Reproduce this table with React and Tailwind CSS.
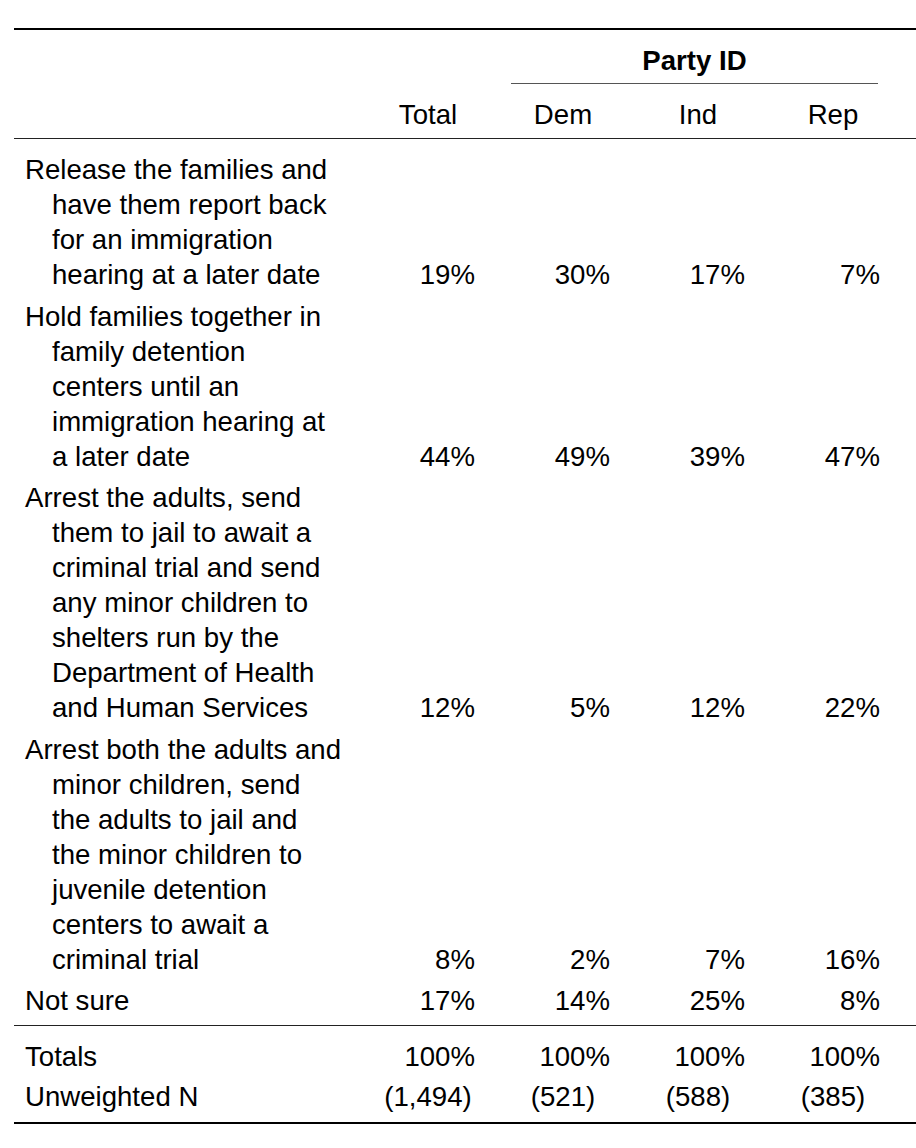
const rows = [
  {
    lines: ['Release the families and', 'have them report back', 'for an immigration', 'hearing at a later date'],
    values: ['19%', '30%', '17%', '7%'],
  },
  {
    lines: ['Hold families together in', 'family detention', 'centers until an', 'immigration hearing at', 'a later date'],
    values: ['44%', '49%', '39%', '47%'],
  },
  {
    lines: [
      'Arrest the adults, send',
      'them to jail to await a',
      'criminal trial and send',
      'any minor children to',
      'shelters run by the',
      'Department of Health',
      'and Human Services',
    ],
    values: ['12%', '5%', '12%', '22%'],
  },
  {
    lines: [
      'Arrest both the adults and',
      'minor children, send',
      'the adults to jail and',
      'the minor children to',
      'juvenile detention',
      'centers to await a',
      'criminal trial',
    ],
    values: ['8%', '2%', '7%', '16%'],
  },
  { lines: ['Not sure'], values: ['17%', '14%', '25%', '8%'] },
]

function Row({ lines, values, first }) {
  return (
    <div className={`flex items-end ${first ? '' : 'mt-[6.5px]'}`}>
      <div className="w-[326px] pl-[11px] whitespace-nowrap">
        {lines.map((l, i) => (
          <div key={i} className={i ? 'pl-[27px]' : ''}>{l}</div>
        ))}
      </div>
      {values.map((v, i) => (
        <div key={i} className="w-[135px] text-right">{v}</div>
      ))}
    </div>
  )
}

export default function App() {
  return (
    <div className="min-h-screen bg-white pt-[28px] pl-[14px] text-black text-[27.6px] leading-[35px] font-['Liberation_Sans',Arial,sans-serif]">
      <div className="border-t-2 border-black">
        {/* header */}
        <div className="flex pt-[13px]">
          <div className="w-[461px]" />
          <div className="w-[405px] pl-[36px] pr-[2px]">
            <div className="border-b border-[#555] pb-[5px] text-center font-bold">Party ID</div>
          </div>
        </div>
        <div className="flex pt-[13px] pb-[6px] border-b border-[#222]">
          <div className="w-[326px]" />
          {['Total', 'Dem', 'Ind', 'Rep'].map((h) => (
            <div key={h} className="w-[135px] pl-[41px] text-center">{h}</div>
          ))}
        </div>

        {/* body */}
        <div className="pt-[13px] pb-[6.5px] border-b border-[#222]">
          {rows.map((r, i) => (
            <Row key={i} lines={r.lines} values={r.values} first={i === 0} />
          ))}
        </div>

        {/* totals */}
        <div className="pt-[13.5px] pb-[7.5px] border-b-2 border-black">
          <div className="flex">
            <div className="w-[326px] pl-[11px]">Totals</div>
            {['100%', '100%', '100%', '100%'].map((v, i) => (
              <div key={i} className="w-[135px] text-right">{v}</div>
            ))}
          </div>
          <div className="flex mt-[5px]">
            <div className="w-[326px] pl-[11px]">Unweighted N</div>
            {['(1,494)', '(521)', '(588)', '(385)'].map((v, i) => (
              <div key={i} className="w-[135px] pl-[41px] text-center">{v}</div>
            ))}
          </div>
        </div>
      </div>
    </div>
  )
}
